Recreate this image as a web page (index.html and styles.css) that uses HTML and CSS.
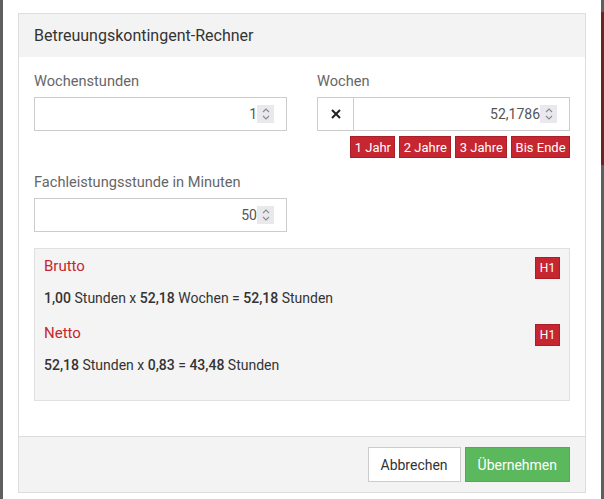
FILE: index.html
```html
<!DOCTYPE html>
<html lang="de">

<head>
    <meta charset="UTF-8">
    <meta name="viewport" content="width=device-width, initial-scale=1.0">
    <link rel="stylesheet" href="styles.css">
    <title>Betreuungskontingent-Rechner</title>
</head>

<body>
    <div class="page">
        <div class="edge edge-left"></div>

        <div class="stage">
            <div class="modal">
                <div class="modal-header">Betreuungskontingent-Rechner</div>

                <div class="modal-body">
                    <div class="form-row">
                        <div class="group">
                            <label class="label">Wochenstunden</label>
                            <div class="field">
                                <span class="value">1</span>
                                <span class="spinner">
                                    <svg width="10" height="14" viewBox="0 0 10 14"><path d="M2 5 L5 2 L8 5 M2 9 L5 12 L8 9" fill="none" stroke="#8a8a8a" stroke-width="1.1"/></svg>
                                </span>
                            </div>
                        </div>

                        <div class="group">
                            <label class="label">Wochen</label>
                            <div class="input-group">
                                <span class="addon">
                                    <svg width="10" height="10" viewBox="0 0 10 10"><path d="M1 1 L9 9 M9 1 L1 9" stroke="#222" stroke-width="2"/></svg>
                                </span>
                                <div class="field field-grow">
                                    <span class="value">52,1786</span>
                                    <span class="spinner">
                                        <svg width="10" height="14" viewBox="0 0 10 14"><path d="M2 5 L5 2 L8 5 M2 9 L5 12 L8 9" fill="none" stroke="#8a8a8a" stroke-width="1.1"/></svg>
                                    </span>
                                </div>
                            </div>
                            <div class="quick">
                                <button class="btn-red">1 Jahr</button>
                                <button class="btn-red">2 Jahre</button>
                                <button class="btn-red">3 Jahre</button>
                                <button class="btn-red">Bis Ende</button>
                            </div>
                        </div>
                    </div>

                    <div class="form-row">
                        <div class="group">
                            <label class="label">Fachleistungsstunde in Minuten</label>
                            <div class="field">
                                <span class="value">50</span>
                                <span class="spinner">
                                    <svg width="10" height="14" viewBox="0 0 10 14"><path d="M2 5 L5 2 L8 5 M2 9 L5 12 L8 9" fill="none" stroke="#8a8a8a" stroke-width="1.1"/></svg>
                                </span>
                            </div>
                        </div>
                    </div>

                    <div class="result">
                        <div class="result-head">
                            <span class="result-title">Brutto</span>
                            <span class="badge">H1</span>
                        </div>
                        <p class="result-line"><b>1,00</b> Stunden x <b>52,18</b> Wochen = <b>52,18</b> Stunden</p>

                        <div class="result-head">
                            <span class="result-title">Netto</span>
                            <span class="badge">H1</span>
                        </div>
                        <p class="result-line"><b>52,18</b> Stunden x <b>0,83</b> = <b>43,48</b> Stunden</p>
                    </div>
                </div>

                <div class="modal-footer">
                    <button class="btn btn-default">Abbrechen</button>
                    <button class="btn btn-success">Übernehmen</button>
                </div>
            </div>
        </div>

        <div class="edge edge-right">
            <div class="edge-mark"></div>
        </div>
    </div>
</body>

</html>
```

FILE: styles.css
```css
* {
    margin: 0;
    padding: 0;
    box-sizing: border-box;
}

body {
    font-family: Roboto, "Liberation Sans", sans-serif;
    font-size: 14px;
    color: #333;
    background: #fff;
}

.page {
    display: flex;
    height: 499px;
}

.edge {
    width: 3px;
    background-color: #5f5f5f;
}

.edge-right {
    padding-top: 12px;
}

.edge-mark {
    height: 153px;
    background-color: #6d2424;
}

.stage {
    flex: 1;
    padding: 13px 15px 0;
}

.modal {
    border: 1px solid #ddd;
    background: #fff;
}

.modal-header {
    background-color: #f3f3f3;
    font-size: 16px;
    line-height: 20px;
    padding: 12px 15px 11px;
    color: #333;
}

.modal-body {
    padding: 14px 15px 35px;
}

.form-row {
    display: grid;
    grid-template-columns: 1fr 1fr;
    column-gap: 30px;
    margin-bottom: 14px;
}

.label {
    display: block;
    color: #666;
    font-size: 14.6px;
    line-height: 20px;
    margin-bottom: 6px;
}

.field {
    height: 34px;
    border: 1px solid #ccc;
    display: flex;
    align-items: center;
    justify-content: flex-end;
    padding-right: 12px;
    color: #555;
    background: #fff;
}

.value {
    line-height: 20px;
}

.spinner {
    width: 17px;
    height: 18px;
    background-color: #e9e9ed;
    display: flex;
    align-items: center;
    justify-content: center;
}

.input-group {
    display: flex;
}

.addon {
    width: 36px;
    height: 34px;
    border: 1px solid #ccc;
    border-right: none;
    display: flex;
    align-items: center;
    justify-content: center;
}

.field-grow {
    flex: 1;
}

.quick {
    display: flex;
    justify-content: flex-end;
    gap: 4px;
    margin-top: 5px;
}

.btn-red {
    font-family: inherit;
    font-size: 13px;
    height: 22px;
    padding: 0 3.4px;
    color: #fff;
    background-color: #c62630;
    border: 1px solid #a91e27;
}

.result {
    margin-top: 16px;
    background-color: #f4f4f4;
    border: 1px solid #e0e0e0;
    padding: 8px 9px 9px;
}

.result-head {
    display: flex;
    justify-content: space-between;
    align-items: flex-start;
    height: 22px;
}

.result-title {
    color: #c62630;
    font-size: 15px;
    line-height: 18px;
}

.badge {
    width: 25px;
    height: 22px;
    background-color: #c62630;
    border: 1px solid #a91e27;
    color: #fff;
    font-size: 12px;
    display: flex;
    align-items: center;
    justify-content: center;
}

.result-line {
    line-height: 20px;
    margin: 9px 0 16px;
}

.result-line b {
    font-weight: 500;
}

.modal-footer {
    border-top: 1px solid #ddd;
    background-color: #f3f3f3;
    padding: 10px 15px 10px;
    display: flex;
    justify-content: flex-end;
    gap: 4px;
}

.btn {
    font-family: inherit;
    font-size: 14px;
    height: 35px;
    padding: 0 12px;
    border: 1px solid #ccc;
}

.btn-default {
    background: #fff;
    color: #333;
}

.btn-success {
    background-color: #5cb85c;
    border-color: #4cae4c;
    color: #fff;
    padding: 0 12px;
}
```
